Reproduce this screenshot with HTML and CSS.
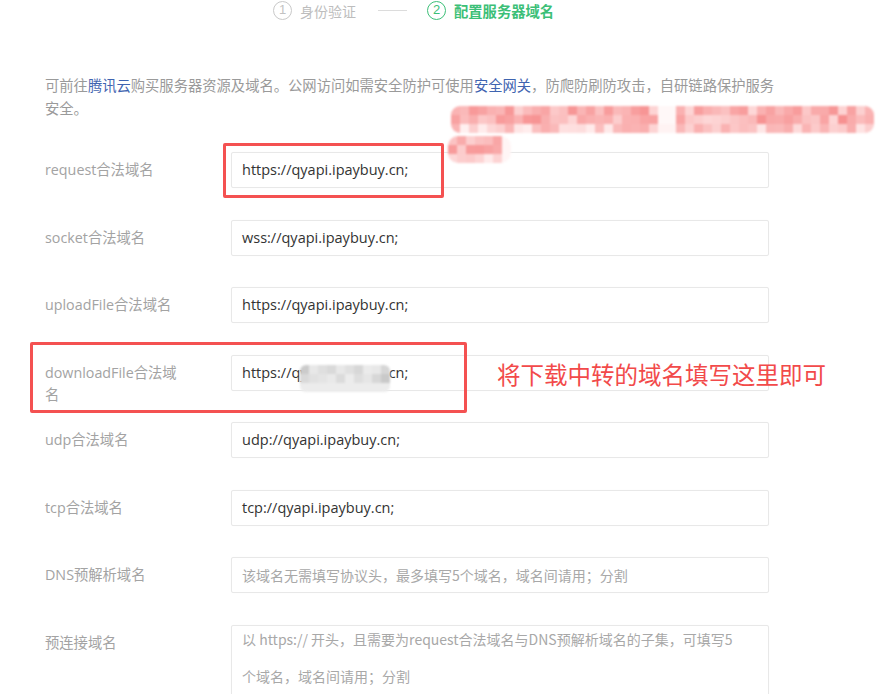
FILE: index.html
```html
<!DOCTYPE html>
<html lang="zh-CN">
<head>
<meta charset="utf-8">
<title>配置服务器域名</title>
<link rel="stylesheet" href="styles.css">
</head>
<body>
<div class="page">
  <div class="steps">
    <span class="step-num">1</span><span class="step-text">身份验证</span>
    <span class="step-line"></span>
    <span class="step-num active">2</span><span class="step-text active">配置服务器域名</span>
  </div>

  <p class="desc">可前往<a class="link">腾讯云</a>购买服务器资源及域名。公网访问如需安全防护可使用<a class="link">安全网关</a>，防爬防刷防攻击，自研链路保护服务安全。</p>

  <div class="form">
    <div class="row"><div class="label">request合法域名</div><div class="field">https://qyapi.ipaybuy.cn;</div></div>
    <div class="row"><div class="label">socket合法域名</div><div class="field">wss://qyapi.ipaybuy.cn;</div></div>
    <div class="row"><div class="label">uploadFile合法域名</div><div class="field">https://qyapi.ipaybuy.cn;</div></div>
    <div class="row"><div class="label">downloadFile合法域名</div><div class="field">https://qyapi.ipaybuy.cn;</div></div>
    <div class="row"><div class="label">udp合法域名</div><div class="field">udp://qyapi.ipaybuy.cn;</div></div>
    <div class="row"><div class="label">tcp合法域名</div><div class="field">tcp://qyapi.ipaybuy.cn;</div></div>
    <div class="row"><div class="label">DNS预解析域名</div><div class="field placeholder">该域名无需填写协议头，最多填写5个域名，域名间请用；分割</div></div>
    <div class="row row-area"><div class="label">预连接域名</div><div class="field area placeholder"><span class="area-text">以 https:// 开头，且需要为request合法域名与DNS预解析域名的子集，可填写5个域名，域名间请用；分割</span></div></div>
  </div>

  <div class="mark mark-request"></div>
  <div class="mark mark-download"></div>
  <div class="note">将下载中转的域名填写这里即可</div>

  <div class="mosaic mosaic-a" id="mosaicA"></div>
  <div class="mosaic mosaic-b" id="mosaicB"></div>
  <div class="mosaic mosaic-c" id="mosaicC"></div>
</div>
<script src="script.js"></script>
</body>
</html>
```

FILE: styles.css
```css
* { box-sizing: border-box; }
html, body { margin: 0; padding: 0; background: #fff; }
body {
  font-family: "Open Sans", "Noto Sans CJK SC", sans-serif;
  color: #333;
  width: 881px;
  height: 694px;
  overflow: hidden;
}
.page { position: relative; padding-left: 45px; height: 694px; }

.steps {
  display: flex;
  align-items: center;
  height: 21px;
  margin-left: 228px;
}
.step-num {
  width: 19px;
  height: 19px;
  border: 1.5px solid #c9c9c9;
  border-radius: 50%;
  color: #c2c2c2;
  font-size: 13px;
  line-height: 16px;
  text-align: center;
  font-family: "Liberation Sans", sans-serif;
}
.step-text {
  margin-left: 8px;
  font-size: 14px;
  color: #bdbdbd;
  font-family: "Noto Sans CJK SC", sans-serif;
}
.step-line {
  width: 29px;
  height: 1px;
  background: #dcdcdc;
  margin: 0 20px 0 22px;
}
.step-num.active { border-color: #3cbf77; color: #3cbf77; }
.step-text.active { color: #3cbf77; font-weight: 700; font-size: 14.3px; }

.desc {
  margin: 52px 0 0 0;
  width: 738px;
  font-size: 14.3px;
  line-height: 23px;
  color: #9a9a9a;
  font-family: "Noto Sans CJK SC", sans-serif;
}
.link { color: #3f64b0; }

.form {
  margin-top: 33px;
  display: flex;
  flex-direction: column;
  gap: 31.5px;
}
.row { display: flex; align-items: flex-start; height: 36px; }
.row-area { height: 90px; }
.label {
  width: 140px;
  margin-right: 46px;
  padding-top: 7px;
  font-size: 14.3px;
  line-height: 22px;
  color: #a3a3a3;
}
.field {
  width: 538px;
  height: 36px;
  border: 1px solid #e8e8e8;
  border-radius: 2px;
  box-shadow: 0 0 1px rgba(0,0,0,0.04);
  padding: 0 10px;
  font-size: 14.5px;
  line-height: 34px;
  color: #333;
  white-space: nowrap;
  overflow: hidden;
}
.field.placeholder { color: #a8a8a8; font-size: 14px; font-family: "Noto Sans CJK SC", sans-serif; }
.field.area {
  height: 90px;
  white-space: normal;
  line-height: 37px;
  padding-right: 22px;
}
.area-text { display: block; margin-top: -5px; }

.mark {
  position: absolute;
  border: 3px solid #f45151;
  border-radius: 2px;
}
.mark-request { left: 223px; top: 143px; width: 221px; height: 55px; }
.mark-download { left: 30px; top: 342px; width: 437px; height: 71px; }
.note {
  position: absolute;
  left: 497px;
  top: 359px;
  font-size: 23.5px;
  line-height: 30px;
  color: #f24a4a;
  font-family: "Noto Sans CJK SC", sans-serif;
  white-space: nowrap;
}

.mosaic {
  position: absolute;
  display: grid;
  filter: blur(0.8px);
  overflow: hidden;
}
.mosaic span { display: block; }
.mosaic-a {
  left: 451px; top: 106px;
  grid-template-columns: repeat(47, 9px);
  grid-auto-rows: 9px;
  border-radius: 9px;
}
.mosaic-b {
  left: 448px; top: 136px;
  grid-template-columns: repeat(7, 9px);
  grid-auto-rows: 9px;
  border-radius: 10px;
}
.mosaic-c {
  left: 300px; top: 365px;
  grid-template-columns: repeat(10, 9px);
  grid-auto-rows: 9px;
  border-radius: 6px;
}
```

FILE: script.js
```js
(function () {
  var seed = 7;
  function rnd() { seed = (seed * 9301 + 49297) % 233280; return seed / 233280; }
  function fill(id, cols, rows, pick) {
    var el = document.getElementById(id);
    for (var r = 0; r < rows; r++) {
      for (var c = 0; c < cols; c++) {
        var s = document.createElement('span');
        s.style.background = pick(r, c, rnd());
        el.appendChild(s);
      }
    }
  }
  function pink(t) {
    var g = Math.round(145 + t * 95);
    return 'rgb(' + Math.round(247 + t * 8) + ',' + g + ',' + g + ')';
  }
  fill('mosaicA', 47, 3, function (r, c, v) {
    if (c >= 23 && c <= 24) return r === 2 ? '#fff3f3' : '#fff8f8';
    var t = v * 0.75 + (r === 2 ? 0.3 : 0.0);
    if (t > 1) t = 1;
    return pink(t);
  });
  fill('mosaicB', 7, 3, function (r, c, v) {
    if (c >= 6) return '#fff5f5';
    var t = v * 0.65 + (r === 2 ? 0.35 : 0.05);
    if (t > 1) t = 1;
    return pink(t);
  });
  fill('mosaicC', 10, 3, function (r, c, v) {
    var base = r === 2 ? 236 : 198 + Math.round(v * 38);
    return 'rgb(' + base + ',' + base + ',' + base + ')';
  });
})();
```
